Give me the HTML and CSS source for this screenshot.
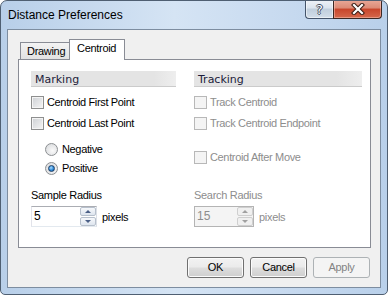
FILE: index.html
```html
<!DOCTYPE html>
<html lang="en">
<head>
    <meta charset="UTF-8">
    <title>Distance Preferences</title>
    <link rel="stylesheet" href="styles.css">
</head>
<body>
<div class="window">
    <div class="titlebar">
        <span class="title">Distance Preferences</span>
        <div class="caption">
            <span class="cap-btn help">?</span>
            <span class="cap-btn close">
                <svg width="14" height="12" viewBox="0 0 14 12">
                    <path d="M3 2 L11 10 M11 2 L3 10" stroke="#3a1c14" stroke-width="4.2" stroke-linecap="square"/>
                    <path d="M3 2 L11 10 M11 2 L3 10" stroke="#fff" stroke-width="2.2" stroke-linecap="square"/>
                </svg>
            </span>
        </div>
    </div>

    <div class="client">
        <div class="tabs">
            <span class="tab">Drawing</span>
            <span class="tab active">Centroid</span>
        </div>

        <div class="panel">
            <div class="col">
                <div class="group-head">Marking</div>
                <div class="row first"><span class="check"></span>Centroid First Point</div>
                <div class="row second"><span class="check"></span>Centroid Last Point</div>
                <div class="radios">
                    <div class="row"><span class="radio"></span>Negative</div>
                    <div class="row next"><span class="radio on"></span>Positive</div>
                </div>
                <div class="field-label">Sample Radius</div>
                <div class="spin-row">
                    <div class="spin">
                        <span class="spin-value">5</span>
                        <div class="spin-btns"><span class="up"></span><span class="down"></span></div>
                    </div>
                    <span class="unit">pixels</span>
                </div>
            </div>

            <div class="col disabled">
                <div class="group-head">Tracking</div>
                <div class="row first"><span class="check"></span>Track Centroid</div>
                <div class="row second"><span class="check"></span>Track Centroid Endpoint</div>
                <div class="row third"><span class="check"></span>Centroid After Move</div>
                <div class="field-label lower">Search Radius</div>
                <div class="spin-row">
                    <div class="spin narrow">
                        <span class="spin-value">15</span>
                        <div class="spin-btns"><span class="up"></span><span class="down"></span></div>
                    </div>
                    <span class="unit">pixels</span>
                </div>
            </div>
        </div>

        <div class="actions">
            <span class="btn">OK</span>
            <span class="btn">Cancel</span>
            <span class="btn off">Apply</span>
        </div>
    </div>
</div>
</body>
</html>
```

FILE: styles.css
```css
body {
    margin: 0;
    font-family: "Liberation Sans", Arial, sans-serif;
    font-size: 11px;
    color: #000;
    background: #fff;
}

.window {
    width: 388px;
    height: 295px;
    box-sizing: border-box;
    border: 1px solid #4f5f72;
    border-radius: 7px 7px 5px 5px;
    background: linear-gradient(to right, #b8cfe9, #d5e4f4 45%, #c9dbf0 70%, #b9d0ea);
    display: flex;
    flex-direction: column;
    overflow: hidden;
}

/* title bar */

.titlebar {
    height: 28px;
    flex: none;
    display: flex;
    justify-content: space-between;
    align-items: flex-start;
    padding: 0 5px 0 7px;
}

.title {
    margin-top: 7px;
    font-size: 12px;
    line-height: 14px;
}

.caption {
    display: flex;
    margin-top: -1px;
}

.cap-btn {
    height: 19px;
    box-sizing: border-box;
    border: 1px solid #44546a;
    border-top: none;
    display: flex;
    align-items: center;
    justify-content: center;
}

.help {
    width: 28px;
    border-right: none;
    border-radius: 0 0 0 4px;
    background: linear-gradient(#eef2f7 0, #dbe4ee 45%, #c0cedc 50%, #d3dee9 100%);
    box-shadow: inset 0 0 0 1px rgba(255, 255, 255, 0.5);
    font-family: "DejaVu Sans", sans-serif;
    font-size: 13px;
    line-height: 15px;
    color: #fff;
    text-shadow: 1px 0 #3d4b5c, -1px 0 #3d4b5c, 0 1px #3d4b5c, 0 -1px #3d4b5c;
}

.close {
    width: 49px;
    border-radius: 0 0 4px 0;
    border-color: #3c2824;
    background: linear-gradient(#e9a999 0, #dc8a75 45%, #c8452b 50%, #d5684c 100%);
    box-shadow: inset 0 0 0 1px rgba(255, 210, 200, 0.45);
}

.close svg {
    display: block;
}

/* client area */

.client {
    flex: 1;
    margin: 0 6px 6px;
    border: 1px solid #7d8da0;
    background: #f0f0f0;
    padding: 9px 9px 0 10px;
    display: flex;
    flex-direction: column;
}

.tabs {
    height: 20px;
    display: flex;
    align-items: flex-end;
    padding-left: 2px;
    position: relative;
    z-index: 1;
}

.tab {
    height: 17px;
    box-sizing: border-box;
    border: 1px solid #898c95;
    border-bottom: none;
    background: linear-gradient(#f3f3f3, #e2e2e2);
    padding: 0 5px 0 6px;
    line-height: 17px;
    letter-spacing: -0.3px;
    width: 50px;
}

.tab.active {
    height: 21px;
    width: 56px;
    margin-left: -1px;
    margin-bottom: -1px;
    background: #fff;
    padding: 0 7px;
    line-height: 16px;
}

.panel {
    height: 189px;
    box-sizing: border-box;
    border: 1px solid #898c95;
    background: #fff;
    padding: 0 8px 0 12px;
    display: grid;
    grid-template-columns: 145px 168px;
    column-gap: 18px;
    align-items: start;
}

.col {
    display: flex;
    flex-direction: column;
}

.group-head {
    margin-top: 11px;
    height: 16px;
    box-sizing: border-box;
    padding: 2px 0 0 4px;
    font-family: "DejaVu Sans", sans-serif;
    font-size: 11px;
    line-height: 13px;
    color: #1c1c3a;
    background: linear-gradient(to right, #e4e4e4 85%, #eeeeee);
    border-bottom: 1px solid #cbcbcb;
}

.row {
    display: flex;
    align-items: center;
    height: 13px;
    line-height: 13px;
    gap: 3px;
    letter-spacing: -0.35px;
    white-space: nowrap;
}

.row.first {
    margin-top: 9px;
}

.row.second {
    margin-top: 8px;
}

.row.third {
    margin-top: 21px;
}

.check {
    width: 13px;
    height: 13px;
    box-sizing: border-box;
    flex: none;
    border: 1px solid #8e8f8f;
    background: linear-gradient(135deg, #cdd0d4, #f5f5f5);
    box-shadow: inset 0 0 0 1px #f4f4f4;
}

.radios {
    margin: 13px 0 0 14px;
}

.radios .row {
    gap: 4px;
}

.radios .row.next {
    margin-top: 6px;
}

.radio {
    width: 13px;
    height: 13px;
    box-sizing: border-box;
    flex: none;
    border: 1px solid #8c8f92;
    border-radius: 50%;
    background: radial-gradient(circle at 60% 60%, #fafafa, #d4d6d9);
    display: flex;
    align-items: center;
    justify-content: center;
}

.radio.on::after {
    content: "";
    width: 7px;
    height: 7px;
    box-sizing: border-box;
    border-radius: 50%;
    border: 1px solid #1d3f66;
    background: radial-gradient(circle at 40% 35%, #a9dbff, #2f8ad8 55%, #0d4f94);
}

.field-label {
    margin-top: 14px;
    height: 13px;
    line-height: 13px;
    letter-spacing: -0.3px;
}

.field-label.lower {
    margin-top: 25px;
}

.spin-row {
    margin-top: 4px;
    display: flex;
    align-items: center;
}

.spin {
    width: 66px;
    height: 21px;
    box-sizing: border-box;
    border: 1px solid;
    border-color: #abadb3 #dbdfe6 #e3e9ef #e2e3ea;
    background: #fff;
    display: flex;
}

.spin.narrow {
    width: 60px;
}

.spin-value {
    flex: 1;
    padding-left: 2px;
    line-height: 19px;
    font-size: 12px;
}

.spin-btns {
    width: 16px;
    display: flex;
    flex-direction: column;
    gap: 1px;
}

.spin-btns span {
    height: 9px;
    box-sizing: border-box;
    border: 1px solid #b7c0cc;
    border-radius: 2px;
    background: linear-gradient(#f6f8fb, #dee5ee);
    display: flex;
    align-items: center;
    justify-content: center;
}

.spin-btns .up::after,
.spin-btns .down::after {
    content: "";
    border-left: 3px solid transparent;
    border-right: 3px solid transparent;
}

.spin-btns .up::after {
    border-bottom: 3px solid #4b5f86;
}

.spin-btns .down::after {
    border-top: 3px solid #4b5f86;
}

.unit {
    margin-left: 5px;
    letter-spacing: -0.3px;
}

/* disabled column */

.disabled {
    color: #8d8d8d;
}

.disabled .group-head {
    color: #1c1c3a;
}

.disabled .check {
    border-color: #b8b8b8;
    background: #f4f4f4;
    box-shadow: none;
}

.disabled .spin {
    border-color: #b4b4b4;
    background: #f4f4f4;
}

.disabled .spin-btns span {
    border-color: #cfcfcf;
    background: #f0f0f0;
}

.disabled .spin-btns .up::after {
    border-bottom-color: #a0a0a0;
}

.disabled .spin-btns .down::after {
    border-top-color: #a0a0a0;
}

/* dialog buttons */

.actions {
    margin-top: 9px;
    padding-right: 1px;
    display: flex;
    justify-content: flex-end;
    gap: 6px;
}

.btn {
    width: 57px;
    height: 21px;
    box-sizing: border-box;
    border: 1px solid #707070;
    border-radius: 3px;
    background: linear-gradient(#f2f2f2 0%, #ebebeb 48%, #dddddd 52%, #cfcfcf 100%);
    box-shadow: inset 0 0 0 1px #fbfbfb;
    text-align: center;
    line-height: 19px;
    letter-spacing: -0.3px;
}

.btn.off {
    border-color: #adb2b5;
    background: #f4f4f4;
    box-shadow: none;
    color: #838383;
}
```
